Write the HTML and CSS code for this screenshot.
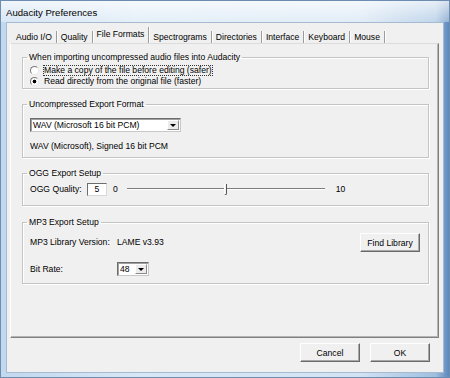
FILE: index.html
```html
<!doctype html>
<html lang="en-US">
<head>
<title>Audacity Preferences</title>
<link rel="stylesheet" href="styles.css">
</head>
<body>
<div class="window">
<div class="titlebar">Audacity Preferences</div>
<div class="client">
<div class="tabs">
	<span class="tab">Audio I/O</span>
	<span class="tab">Quality</span>
	<span class="tab selected">File Formats</span>
	<span class="tab">Spectrograms</span>
	<span class="tab">Directories</span>
	<span class="tab">Interface</span>
	<span class="tab">Keyboard</span>
	<span class="tab">Mouse</span>
</div>
<div class="panel">
<fieldset class="group import">
	<legend>When importing uncompressed audio files into Audacity</legend>
	<div class="option"><span class="radio"></span><span class="optlabel focus">Make a copy of the file before editing (safer)</span></div>
	<div class="option"><span class="radio checked"></span><span class="optlabel">Read directly from the original file (faster)</span></div>
</fieldset>
<fieldset class="group format">
	<legend>Uncompressed Export Format</legend>
	<div class="combo wide"><span class="value">WAV (Microsoft 16 bit PCM)</span><span class="arrow"></span></div>
	<div class="desc">WAV (Microsoft), Signed 16 bit PCM</div>
</fieldset>
<fieldset class="group ogg">
	<legend>OGG Export Setup</legend>
	<div class="row">
		<span class="label short">OGG Quality:</span>
		<span class="edit">5</span>
		<span class="tick">0</span>
		<div class="slider"><span class="thumb"></span></div>
		<span class="tick">10</span>
	</div>
</fieldset>
<fieldset class="group mp3">
	<legend>MP3 Export Setup</legend>
	<div class="row">
		<span class="label">MP3 Library Version:</span>
		<span>LAME v3.93</span>
		<button class="btn find">Find Library</button>
	</div>
	<div class="row bitrate">
		<span class="label">Bit Rate:</span>
		<div class="combo small"><span class="value">48</span><span class="arrow"></span></div>
	</div>
</fieldset>
</div>
<div class="actions">
	<button class="btn">Cancel</button>
	<button class="btn">OK</button>
</div>
</div>
</div>
</body>
</html>
```
FILE: styles.css
```css
html, body {
	margin: 0;
	height: 100%;
	font-family: "Liberation Sans", Arial, sans-serif;
	font-size: 8.6px;
	line-height: 11px;
	color: #000;
}
.window {
	width: 450px;
	height: 378px;
	box-sizing: border-box;
	display: flex;
	flex-direction: column;
	border: 1px solid #6d8db0;
	background: linear-gradient(to right, #c2d8ee 0, #d8e7f5 30%, #d3e3f3 80%, #9fbfe0 97%, #5c88bc 100%);
}
.titlebar {
	height: 21px;
	padding-left: 5px;
	font-size: 9.6px;
	line-height: 23px;
	background: linear-gradient(to bottom, rgba(255,255,255,0.75), rgba(255,255,255,0.35));
}
.client {
	flex: 1;
	margin: 0 5px 4px 5px;
	padding: 0 4px 0 3px;
	border: 1px solid #a6bbd1;
	background: #f0f0f0;
	display: flex;
	flex-direction: column;
}
.tabs {
	height: 20px;
	padding-left: 2px;
	display: flex;
	align-items: flex-end;
}
.tab {
	height: 12px;
	line-height: 12px;
	padding: 0 4px;
	border-right: 1px solid #9c9c9c;
	box-shadow: 1px 0 0 #fff;
}
.tab.selected {
	height: 16px;
	line-height: 14px;
}
.panel {
	flex: 1;
	padding: 8px 9px 0 11px;
	border: 1px solid;
	border-color: #dcdcdc #808080 #808080 #fff;
	box-shadow: inset -1px -1px 0 #b4b4b4;
}
.group {
	margin: 0 0 10px 0;
	padding: 0 8px 0 7px;
	border: 1px solid #c4c4c4;
	box-shadow: inset 1px 1px 0 #fff, 1px 1px 0 #fff;
	min-inline-size: 0;
}
.group legend {
	margin-left: -3px;
	padding: 0 2px;
	line-height: 11px;
}
.import {
	padding-top: 2px;
	padding-bottom: 1px;
}
.format {
	padding-top: 8px;
	padding-bottom: 5px;
}
.ogg {
	padding-top: 4px;
	padding-bottom: 9px;
}
.mp3 {
	margin-top: 11px;
	padding-top: 5px;
	padding-bottom: 7px;
}
.option {
	display: flex;
	align-items: center;
	height: 11px;
}
.radio {
	width: 9px;
	height: 9px;
	box-sizing: border-box;
	margin-right: 4px;
	border-radius: 50%;
	border: 1px solid;
	border-color: #7a7a7a #e8e8e8 #e8e8e8 #7a7a7a;
	background: #fff;
}
.radio.checked {
	background: radial-gradient(circle, #000 0, #000 1.6px, #fff 2.2px);
}
.optlabel {
	border: 1px dotted transparent;
	line-height: 9px;
}
.optlabel.focus {
	border-color: #333;
}
.combo {
	height: 14px;
	box-sizing: border-box;
	display: flex;
	align-items: stretch;
	background: #fff;
	border: 1px solid;
	border-color: #6d6d6d #c8c8c8 #c8c8c8 #6d6d6d;
	box-shadow: inset 1px 1px 0 #a0a0a0;
}
.combo.wide {
	width: 151px;
}
.combo.small {
	width: 32px;
}
.combo .value {
	flex: 1;
	padding-left: 2px;
	line-height: 12px;
}
.arrow {
	width: 12px;
	margin: 1px 1px 1px 0;
	background: #ececec;
	border: 1px solid;
	border-color: #fff #8a8a8a #8a8a8a #fff;
	box-sizing: border-box;
	display: flex;
	align-items: center;
	justify-content: center;
}
.arrow::after {
	content: "";
	border-left: 3px solid transparent;
	border-right: 3px solid transparent;
	border-top: 3px solid #000;
	margin-top: 1px;
}
.desc {
	margin-top: 9px;
}
.row {
	display: flex;
	align-items: center;
}
.label {
	width: 87px;
}
.label.short {
	width: 57px;
}
.edit {
	width: 20px;
	height: 13px;
	box-sizing: border-box;
	text-align: center;
	line-height: 11px;
	background: #fff;
	border: 1px solid;
	border-color: #6d6d6d #d8d8d8 #d8d8d8 #6d6d6d;
}
.tick {
	margin-left: 6px;
}
.slider {
	width: 198px;
	height: 13px;
	margin: 0 11px 0 9px;
	display: flex;
	justify-content: center;
	align-items: center;
	background: linear-gradient(to bottom, transparent 5px, #7c7c7c 5px, #7c7c7c 6px, #fff 6px, #fff 7px, transparent 7px);
}
.thumb {
	width: 3px;
	height: 11px;
	box-sizing: border-box;
	background: #f0f0f0;
	border-left: 1px solid #fff;
	border-right: 1px solid #555;
	border-bottom: 1px solid #555;
	border-radius: 0 0 2px 0;
}
.slider + .tick {
	margin-left: 0;
}
.btn {
	width: 60px;
	height: 19px;
	padding: 0;
	font-family: inherit;
	font-size: 8.6px;
	color: #000;
	background: #f0f0f0;
	border: 1px solid;
	border-color: #fff #6a6a6a #6a6a6a #fff;
	box-shadow: inset -1px -1px 0 #a8a8a8;
}
.btn.find {
	margin-left: auto;
}
.bitrate {
	margin-top: 10px;
}
.actions {
	height: 34px;
	box-sizing: border-box;
	padding: 5px 9px 0 0;
	display: flex;
	justify-content: flex-end;
	gap: 10px;
}
```
